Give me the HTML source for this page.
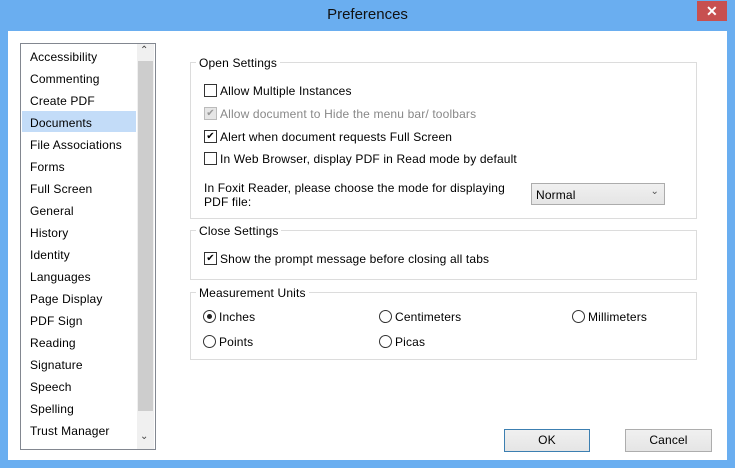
<!DOCTYPE html>
<html><head><style>
body{margin:0;width:735px;height:468px;background:#6aaef0;font-family:"Liberation Sans",sans-serif;font-size:12px;letter-spacing:0.15px;color:#000;position:relative;overflow:hidden}
.a{position:absolute;white-space:nowrap}
.title{left:0;top:6px;width:735px;text-align:center;font-size:15px;color:#111;letter-spacing:0}
.close{left:697px;top:1px;width:30px;height:20px;background:#c75050;color:#fff;text-align:center;font-size:14px;line-height:20px;font-weight:bold}
.client{left:8px;top:31px;width:719px;height:429px;background:#fff}
.list{left:20px;top:43px;width:134px;height:405px;border:1px solid #828790;background:#fff}
.item{left:30px}
.sel{left:22px;top:111px;width:114px;height:21px;background:#c3dcf8}
.sb{left:137px;top:44px;width:17px;height:405px;background:#f0f0f0}
.thumb{left:138px;top:61px;width:15px;height:350px;background:#cdcdcd}
.grp{border:1px solid #dcdcdc;position:absolute}
.gl{background:#fff;padding:0 3px}
.cb{width:11px;height:11px;border:1px solid #333;background:#fff;text-align:center;font-size:10px;line-height:11px}
.rb{width:11px;height:11px;border:1px solid #333;border-radius:50%;background:#fff}
.btn{height:21px;border:1px solid #adadad;background:linear-gradient(#f0f0f0,#e5e5e5);text-align:center;line-height:21px}
</style></head><body>
<div class="a title">Preferences</div>
<div class="a close">✕</div>
<div class="a client"></div>
<div class="a list"></div>
<div class="a sel"></div>
<div class="a sb"></div>
<div class="a thumb"></div>
<div class="a" style="left:140px;top:45px;font-size:10px;color:#444">⌃</div>
<div class="a" style="left:140px;top:431px;font-size:10px;color:#444">⌄</div>
<div class="a item" style="top:50px">Accessibility</div>
<div class="a item" style="top:72px">Commenting</div>
<div class="a item" style="top:94px">Create PDF</div>
<div class="a item" style="top:116px">Documents</div>
<div class="a item" style="top:138px">File Associations</div>
<div class="a item" style="top:160px">Forms</div>
<div class="a item" style="top:182px">Full Screen</div>
<div class="a item" style="top:204px">General</div>
<div class="a item" style="top:226px">History</div>
<div class="a item" style="top:248px">Identity</div>
<div class="a item" style="top:270px">Languages</div>
<div class="a item" style="top:292px">Page Display</div>
<div class="a item" style="top:314px">PDF Sign</div>
<div class="a item" style="top:336px">Reading</div>
<div class="a item" style="top:358px">Signature</div>
<div class="a item" style="top:380px">Speech</div>
<div class="a item" style="top:402px">Spelling</div>
<div class="a item" style="top:424px">Trust Manager</div>

<div class="grp" style="left:190px;top:62px;width:505px;height:155px"></div>
<div class="a gl" style="left:196px;top:56px">Open Settings</div>
<div class="a cb" style="left:204px;top:84px"></div><div class="a" style="left:220px;top:84px">Allow Multiple Instances</div>
<div class="a cb" style="left:204px;top:107px;border-color:#bbb;background:#e6e6e6;color:#999">✔</div><div class="a" style="left:220px;top:107px;color:#888">Allow document to Hide the menu bar/ toolbars</div>
<div class="a cb" style="left:204px;top:130px">✔</div><div class="a" style="left:220px;top:130px">Alert when document requests Full Screen</div>
<div class="a cb" style="left:204px;top:152px"></div><div class="a" style="left:220px;top:152px">In Web Browser, display PDF in Read mode by default</div>
<div class="a" style="left:204px;top:181px;line-height:14px">In Foxit Reader, please choose the mode for displaying<br>PDF file:</div>
<div class="a" style="left:531px;top:183px;width:132px;height:20px;border:1px solid #acacac;background:linear-gradient(#f0f0f0,#e5e5e5)"><span style="position:absolute;left:4px;top:4px">Normal</span><span style="position:absolute;right:5px;top:2px;font-size:10px;color:#555">⌄</span></div>

<div class="grp" style="left:190px;top:230px;width:505px;height:48px"></div>
<div class="a gl" style="left:196px;top:224px">Close Settings</div>
<div class="a cb" style="left:204px;top:252px">✔</div><div class="a" style="left:220px;top:252px">Show the prompt message before closing all tabs</div>

<div class="grp" style="left:190px;top:292px;width:505px;height:66px"></div>
<div class="a gl" style="left:196px;top:286px">Measurement Units</div>
<div class="a rb" style="left:203px;top:310px"><div style="margin:3px;width:5px;height:5px;border-radius:50%;background:#222"></div></div><div class="a" style="left:219px;top:310px">Inches</div>
<div class="a rb" style="left:379px;top:310px"></div><div class="a" style="left:395px;top:310px">Centimeters</div>
<div class="a rb" style="left:572px;top:310px"></div><div class="a" style="left:588px;top:310px">Millimeters</div>
<div class="a rb" style="left:203px;top:335px"></div><div class="a" style="left:219px;top:335px">Points</div>
<div class="a rb" style="left:379px;top:335px"></div><div class="a" style="left:395px;top:335px">Picas</div>

<div class="a btn" style="left:504px;top:429px;width:84px;border-color:#3c7fb1">OK</div>
<div class="a btn" style="left:625px;top:429px;width:85px">Cancel</div>
</body></html>
